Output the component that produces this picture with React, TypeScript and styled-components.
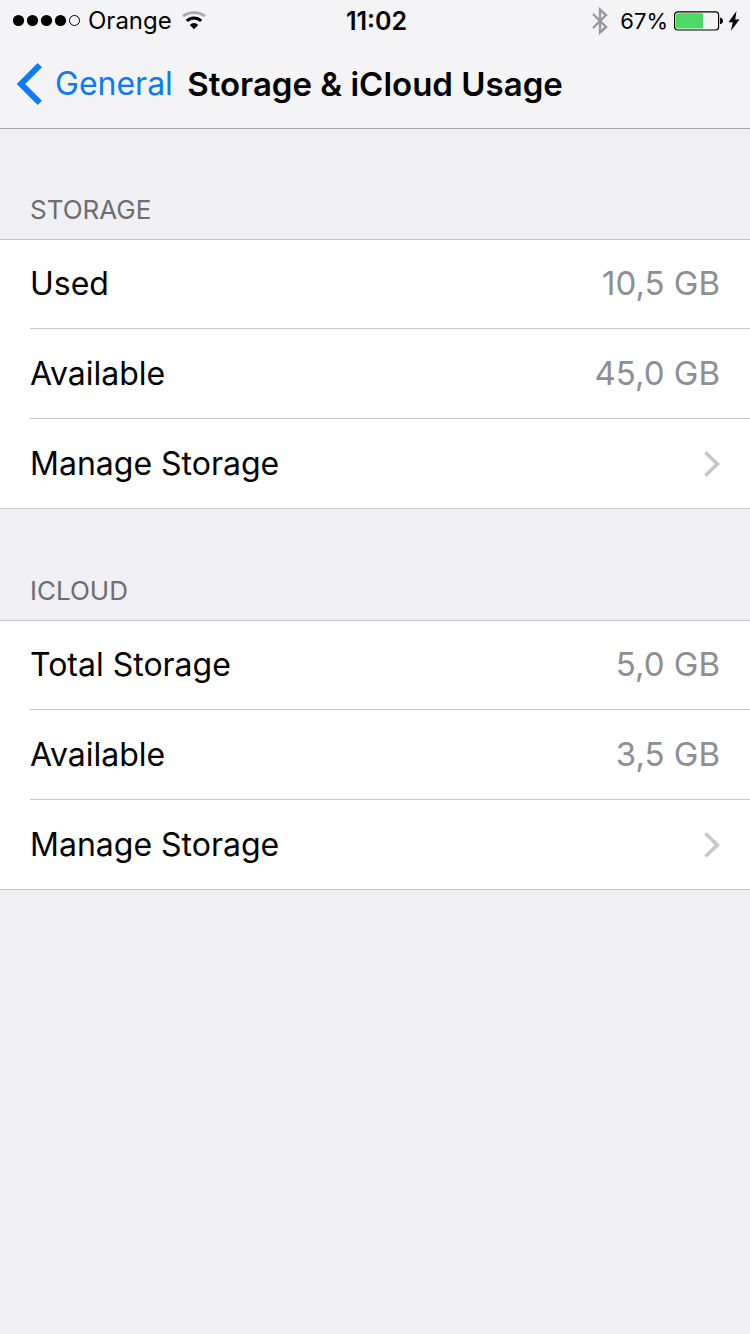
import React from "react";
import styled, { createGlobalStyle } from "styled-components";

const GlobalStyle = createGlobalStyle`
  *, *::before, *::after { box-sizing: border-box; }
  body {
    margin: 0;
    background: #efeff4;
    color: #000;
    font-family: Inter, Roboto, "Liberation Sans", sans-serif;
  }
`;

const Header = styled.header`
  background: #f4f4f6;
  border-bottom: 1px solid #a8a8ad;
`;

const StatusBar = styled.div`
  display: grid;
  grid-template-columns: 1fr auto 1fr;
  align-items: center;
  height: 41px;
  padding: 0 10px 0 13px;
  font-size: 24px;
  line-height: 28px;
`;

const StatusSide = styled.div<{ $end?: boolean }>`
  display: flex;
  align-items: center;
  justify-content: ${(p) => (p.$end ? "flex-end" : "flex-start")};
  svg { display: block; flex: none; }
`;

const Carrier = styled.span`
  margin: 0 10px 0 7px;
`;

const Percent = styled.span`
  margin: 0 6px 0 12px;
  font-size: 22px;
`;

const Power = styled.span`
  display: flex;
  align-items: center;
  gap: 4px;
`;

const Clock = styled.time`
  font-size: 25px;
  font-weight: 600;
`;

const NavBar = styled.nav`
  display: grid;
  grid-template-columns: 1fr auto 1fr;
  align-items: center;
  height: 87px;
  padding: 0 16px 2px;
`;

const BackLink = styled.a`
  display: flex;
  align-items: center;
  gap: 12px;
  color: #0b7af5;
  font-size: 32px;
  line-height: 42px;
  text-decoration: none;
  svg { display: block; flex: none; }
`;

const Title = styled.h1`
  margin: 0;
  font-size: 33px;
  line-height: 40px;
  font-weight: 600;
  white-space: nowrap;
`;

const Section = styled.section`
  & + & { margin-top: 1px; }
`;

const SectionTitle = styled.h2`
  display: flex;
  align-items: flex-end;
  height: 110px;
  margin: 0;
  padding: 0 30px 13px;
  color: #6d6d72;
  font-size: 26px;
  line-height: 32px;
  font-weight: 400;
  text-transform: uppercase;
`;

const List = styled.ul`
  margin: 0;
  padding: 0;
  list-style: none;
  background: #fff;
`;

const Item = styled.li`
  height: 90px;
  padding-left: 30px;
  &:first-child { border-top: 1px solid #c8c7cc; }
  &:last-child { padding-left: 0; border-bottom: 1px solid #c8c7cc; }
`;

const Row = styled.div`
  display: flex;
  align-items: center;
  justify-content: space-between;
  width: 100%;
  height: 100%;
  padding-right: 30px;
  border-bottom: 1px solid #c8c7cc;
`;

const RowButton = styled.button`
  display: flex;
  align-items: center;
  justify-content: space-between;
  width: 100%;
  height: 100%;
  padding: 0 30px;
  border: 0;
  background: none;
  color: inherit;
  font: inherit;
  text-align: left;
  cursor: pointer;
`;

const Label = styled.span`
  font-size: 32px;
  line-height: 40px;
`;

const Value = styled.span`
  padding-bottom: 2px;
  color: #8e8e93;
  font-size: 33px;
  line-height: 40px;
`;

const SignalIcon = () => (
  <svg width="68" height="13" viewBox="0 0 68 13" role="img" aria-label="Signal: 4 of 5">
    {[5.5, 19.5, 33.5, 47.5].map((x) => (
      <circle key={x} cx={x} cy="6.5" r="5.6" />
    ))}
    <circle cx="61.5" cy="6.5" r="5" fill="none" stroke="#000" strokeWidth="1" />
  </svg>
);

const WifiIcon = () => (
  <svg width="24" height="20" viewBox="0 0 24 20" fill="none" role="img" aria-label="Wi-Fi">
    <path d="M1 5.2C7 .3 17 .3 23 5.2" stroke="#a9a9ab" strokeWidth="2.8" />
    <path d="M4.800 9.900c4-4 10.400-4 14.400 0" stroke="#000" strokeWidth="3" />
    <path d="M7.800 14c2.300-2.700 6.100-2.700 8.400 0L12 18.200z" fill="#000" />
  </svg>
);

const BluetoothIcon = () => (
  <svg width="16" height="28" viewBox="0 0 16 28" fill="none" stroke="#98989b" strokeWidth="2.4" role="img" aria-label="Bluetooth">
    <path d="M1 7l13 13-6 5.500V2.500L14 8 1 21" />
  </svg>
);

const BatteryIcon = () => (
  <svg width="50" height="20" viewBox="0 0 50 20" role="img" aria-label="Battery">
    <rect x=".6" y=".8" width="44" height="18.200" rx="3" fill="none" stroke="#000" strokeWidth="1.200" />
    <rect x="2" y="2.200" width="27" height="15.400" rx="1" fill="#4cd964" />
    <path d="M46 6.500c4 .8 4 6 0 6.800z" />
  </svg>
);

const BoltIcon = () => (
  <svg width="12" height="20" viewBox="0 0 12 20" role="img" aria-label="Charging">
    <path d="M8.500 0L.5 11.200h4.300L2.800 20l8.700-11.600H7.200z" />
  </svg>
);

const BackIcon = () => (
  <svg width="27" height="42" viewBox="0 0 27 42" fill="none" stroke="currentColor" strokeWidth="6" aria-hidden="true">
    <path d="M23.800 2.200L5 21l18.800 18.800" />
  </svg>
);

const DisclosureIcon = () => (
  <svg width="16" height="26" viewBox="0 0 16 26" fill="none" stroke="#c7c7cc" strokeWidth="3.600" aria-hidden="true">
    <path d="M1.500 1.500L13.300 13 1.500 24.500" />
  </svg>
);

const groups = [
  { title: "Storage", rows: [["Used", "10,5 GB"], ["Available", "45,0 GB"]] },
  { title: "iCloud", rows: [["Total Storage", "5,0 GB"], ["Available", "3,5 GB"]] },
];

export default function App() {
  return (
    <>
      <GlobalStyle />
      <Header>
        <StatusBar>
          <StatusSide>
            <SignalIcon />
            <Carrier>Orange</Carrier>
            <WifiIcon />
          </StatusSide>
          <Clock>11:02</Clock>
          <StatusSide $end>
            <BluetoothIcon />
            <Percent>67%</Percent>
            <Power>
              <BatteryIcon />
              <BoltIcon />
            </Power>
          </StatusSide>
        </StatusBar>
        <NavBar>
          <BackLink href="#general">
            <BackIcon />
            General
          </BackLink>
          <Title>Storage &amp; iCloud Usage</Title>
        </NavBar>
      </Header>
      <main>
        {groups.map((group) => (
          <Section key={group.title}>
            <SectionTitle>{group.title}</SectionTitle>
            <List>
              {group.rows.map(([label, value]) => (
                <Item key={label}>
                  <Row>
                    <Label>{label}</Label>
                    <Value>{value}</Value>
                  </Row>
                </Item>
              ))}
              <Item>
                <RowButton type="button">
                  <Label>Manage Storage</Label>
                  <DisclosureIcon />
                </RowButton>
              </Item>
            </List>
          </Section>
        ))}
      </main>
    </>
  );
}
